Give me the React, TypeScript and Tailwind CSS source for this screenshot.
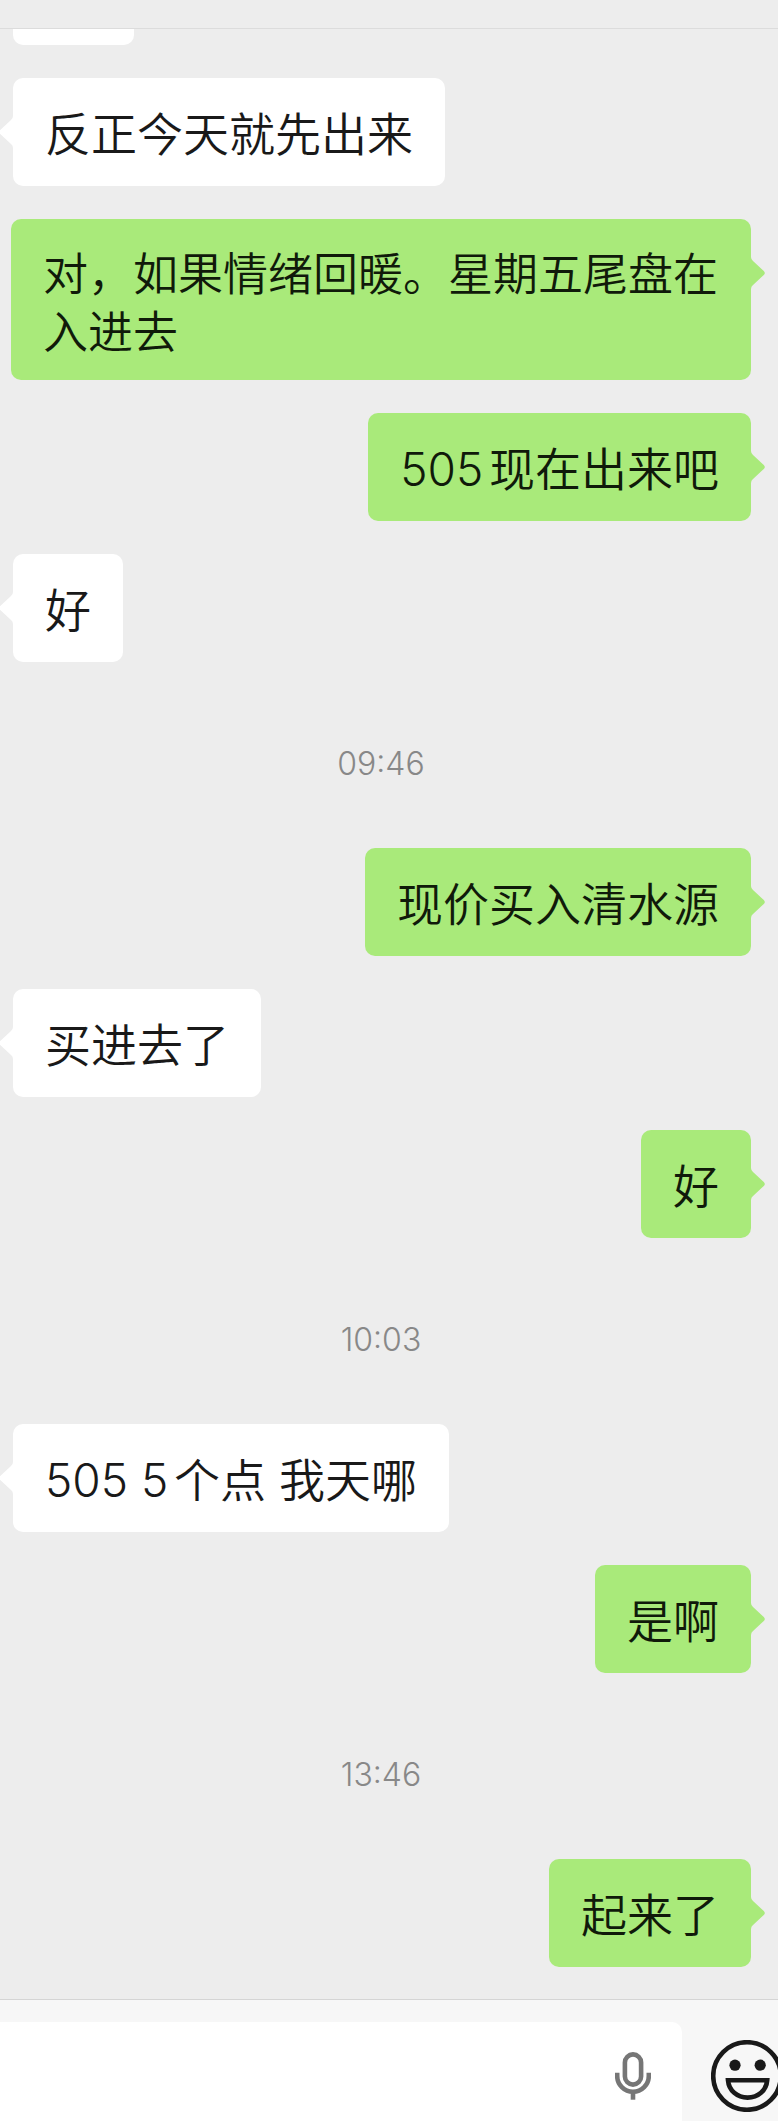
type Item =
	| { kind: "message"; from: "me" | "them"; text: string; long?: boolean }
	| { kind: "time"; text: string };

const ITEMS: Item[] = [
	{ kind: "message", from: "them", text: "反正今天就先出来" },
	{
		kind: "message",
		from: "me",
		text: "对，如果情绪回暖。星期五尾盘在入进去",
		long: true,
	},
	{ kind: "message", from: "me", text: "505现在出来吧" },
	{ kind: "message", from: "them", text: "好" },
	{ kind: "time", text: "09:46" },
	{ kind: "message", from: "me", text: "现价买入清水源" },
	{ kind: "message", from: "them", text: "买进去了" },
	{ kind: "message", from: "me", text: "好" },
	{ kind: "time", text: "10:03" },
	{ kind: "message", from: "them", text: "505 5个点 我天哪" },
	{ kind: "message", from: "me", text: "是啊" },
	{ kind: "time", text: "13:46" },
	{ kind: "message", from: "me", text: "起来了" },
];

function Tail({ mine }: { mine: boolean }) {
	return (
		<svg
			viewBox="0 0 14 32"
			aria-hidden="true"
			className={
				mine
					? "absolute top-[38px] left-full w-3.5 h-8 fill-[#a9ea7a]"
					: "absolute top-[38px] right-full w-3.5 h-8 fill-white -scale-x-100"
			}
		>
			<path d="M0 0Q0 2.5 2 4L13 14.2Q14.6 16 13 17.8L2 28Q0 29.5 0 32Z" />
		</svg>
	);
}

function Bubble({ from, text, long }: { from: "me" | "them"; text: string; long?: boolean }) {
	const mine = from === "me";

	return (
		<li className={mine ? "flex justify-end" : "flex justify-start pl-0.5"}>
			<div
				className={
					mine
						? "relative min-h-[108px] pt-[27px] pb-[18px] px-8 rounded-[10px] bg-[#a9ea7a] text-[#101a0a]"
						: "relative min-h-[108px] pt-[27px] pb-[18px] px-8 rounded-[10px] bg-white text-[#191919]"
				}
			>
				{/* long messages are set slightly tighter so that a full row fits */}
				<p
					className={
						long
							? "text-[45px] leading-[58px] font-[350] [text-autospace:normal]"
							: "text-[46px] leading-[58px] font-[350] [text-autospace:normal]"
					}
				>
					{text}
				</p>
				<Tail mine={mine} />
			</div>
		</li>
	);
}

function MicIcon() {
	return (
		<svg
			viewBox="0 0 36 48"
			aria-hidden="true"
			className="w-9 h-12 fill-none stroke-[#767676]"
			strokeWidth="4.6"
		>
			<rect x="9.9" y="2.4" width="16.2" height="30.2" rx="8.1" />
			<path d="M2.2 20.7V24a15.8 15.8 0 0 0 31.6 0V20.7" />
			<path d="M18 40V47.7" />
		</svg>
	);
}

function SmileyIcon() {
	return (
		<svg
			viewBox="0 0 72 72"
			aria-hidden="true"
			className="w-18 h-18 shrink-0 fill-none stroke-[#191919]"
			strokeWidth="4.6"
		>
			<circle cx="36" cy="36" r="33.8" />
			<circle cx="24" cy="25.2" r="5.6" className="fill-[#191919] stroke-none" />
			<circle cx="49.2" cy="25.2" r="5.6" className="fill-[#191919] stroke-none" />
			<path d="M17 40.2H56.2C55.4 50.5 47 57.6 36.6 57.6S17.8 50.5 17 40.2Z" />
		</svg>
	);
}

export default function App() {
	return (
		<div className="w-full min-h-screen flex flex-col overflow-hidden bg-[#ededed] font-['Inter','Noto_Sans_CJK_SC',sans-serif]">
			<header className="h-[29px] border-b border-[#dcdcdc]" />

			{/* CONVERSATION */}
			<main className="flex-1 pl-[11px] pr-[27px] pb-8">
				{/* end of a message scrolled under the header */}
				<div className="ml-0.5 w-[121px] h-4 rounded-b-[10px] bg-white" />

				<ul className="mt-[33px] flex flex-col gap-[33px]">
					{ITEMS.map((item, i) =>
						item.kind === "time" ? (
							<li
								key={i}
								className="h-[120px] pt-[18px] flex items-center justify-center text-[32px] leading-10 font-[350] text-[#888888]"
							>
								<time>{item.text}</time>
							</li>
						) : (
							<Bubble key={i} from={item.from} text={item.text} long={item.long} />
						),
					)}
				</ul>
			</main>

			{/* INPUT BAR */}
			<footer className="flex pt-[22px] border-t border-[#d5d5d5] bg-[#f7f7f7]">
				<div className="flex-1 min-w-0 h-[99px] flex items-start pt-[30px] pr-[31px] rounded-tr-[10px] bg-white">
					<input
						type="text"
						aria-label="消息"
						className="flex-1 min-w-0 h-12 px-6 text-[46px] text-[#191919] outline-none"
					/>
					<button type="button" aria-label="语音输入">
						<MicIcon />
					</button>
				</div>
				<button
					type="button"
					aria-label="表情"
					className="w-[67px] h-18 mt-[18px] ml-[29px] flex shrink-0 overflow-hidden"
				>
					<SmileyIcon />
				</button>
			</footer>
		</div>
	);
}
